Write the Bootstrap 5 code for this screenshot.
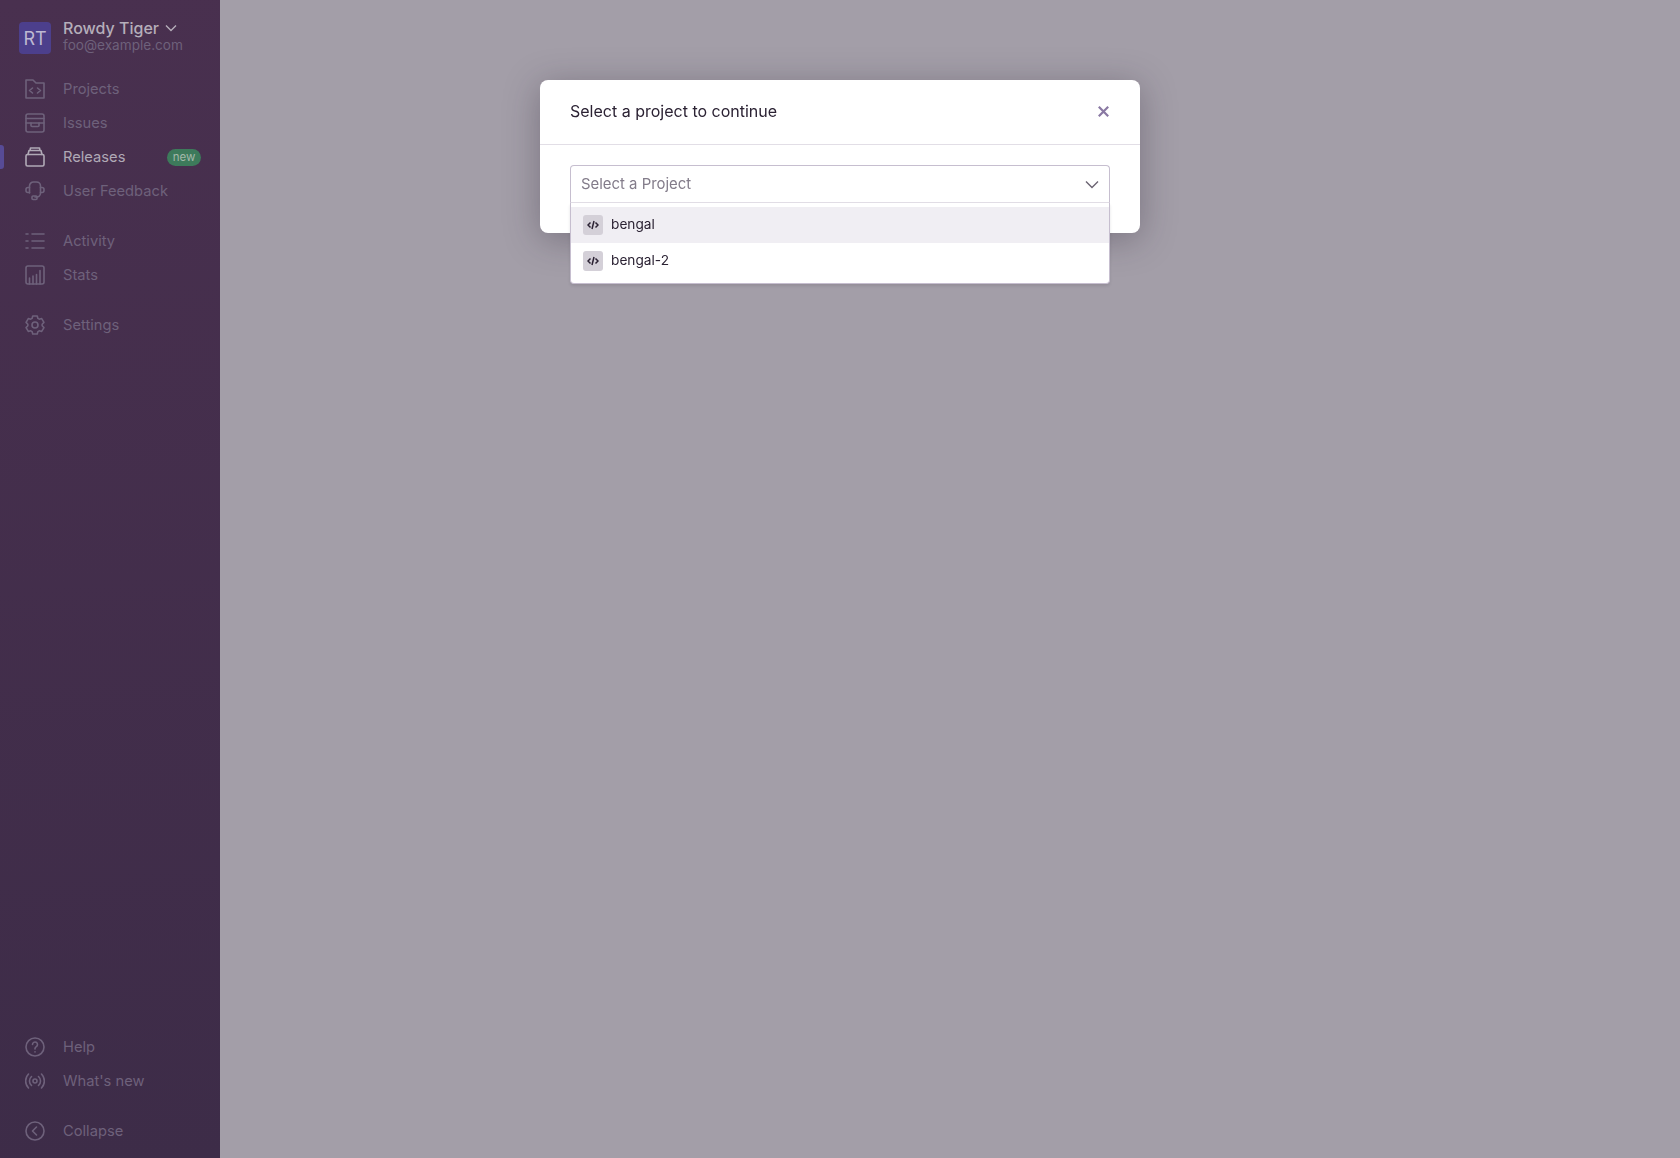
<!DOCTYPE html>
<html lang="en">
<head>
  <meta charset="UTF-8">
  <meta name="viewport" content="width=device-width, initial-scale=1.0">
  <title>Select a project</title>
  <link href="https://cdn.jsdelivr.net/npm/bootstrap@5.3.3/dist/css/bootstrap.min.css" rel="stylesheet">
  <style>
    body {
      background-color: #a39ea8;
      font-family: "Inter", "Liberation Sans", sans-serif;
      font-size: 14.7px;
      height: 1158px;
      overflow: hidden;
    }
    .side-panel {
      width: 220px;
      height: 1158px;
      background: linear-gradient(175deg, #49304f 0%, #3d2c48 100%);
      padding: 22px 0 10px;
    }
    .org-box {
      height: 32px;
      padding: 0 19px;
      margin-bottom: 18px;
      gap: 12px;
    }
    .org-avatar {
      width: 32px;
      height: 32px;
      background-color: #4c3f8c;
      color: #bdb8d2;
      font-size: 18px;
      border-radius: 4px;
    }
    .org-text {
      margin-bottom: 3px;
    }
    .org-name {
      color: #b5aeba;
      font-weight: 500;
      font-size: 16px;
      line-height: 18px;
      margin-top: -1px;
      gap: 6px;
    }
    .org-mail {
      color: #6e617b;
      font-size: 13.6px;
      line-height: 16px;
    }
    .side-link {
      height: 34px;
      padding: 0 19px 0 25px;
      gap: 18px;
      color: #6e617b;
      position: relative;
    }
    .side-link svg {
      width: 20px;
      height: 20px;
      flex: none;
      fill: none;
      stroke: currentColor;
      stroke-width: 1.6;
      stroke-linecap: round;
      stroke-linejoin: round;
    }
    .side-link.current {
      color: #b0a9b6;
    }
    .side-link.current::before {
      content: "";
      position: absolute;
      left: 0;
      top: 5px;
      width: 4px;
      height: 24px;
      background-color: #574b96;
      border-radius: 0 3px 3px 0;
    }
    .new-tag {
      background-color: #3d7a5b;
      color: #a3b8aa;
      font-size: 11.5px;
      line-height: 17px;
      height: 17px;
      padding: 0 5.5px;
      border-radius: 9px;
    }
    .group-gap {
      margin-top: 16px;
    }
    .pick-modal {
      width: 600px;
      margin: 80px auto 0;
      height: 153px;
      border: 0;
      border-radius: 8px;
      box-shadow: 0 6px 35px rgba(43, 34, 51, .35);
    }
    .pick-head {
      height: 65px;
      padding: 0 31px 2px 30px;
      border-bottom: 1px solid #e2dee6;
      color: #2b2233;
      font-size: 16px;
    }
    .close-x {
      width: 11px;
      height: 11px;
      stroke: #8a79a3;
      stroke-width: 2.2;
      fill: none;
    }
    .pick-body {
      padding: 20px 30px 0;
      position: relative;
    }
    .pick-control {
      height: 38px;
      padding: 0 10px;
      border: 1px solid #c6becf;
      border-bottom-color: #e2dee6;
      border-radius: 4px 4px 0 0;
      color: #837c8a;
      font-size: 14.9px;
    }
    .pick-control svg {
      width: 14px;
      height: 9px;
      fill: none;
      stroke: #6b6472;
      stroke-width: 1.4;
    }
    .pick-menu {
      position: absolute;
      left: 30px;
      right: 30px;
      top: 58px;
      padding: 4px 0;
      background-color: #fff;
      border: 1px solid #c6becf;
      border-top: 0;
      border-radius: 0 0 4px 4px;
      box-shadow: 0 2px 3px rgba(43, 34, 51, .12);
      z-index: 2;
    }
    .pick-option {
      height: 36px;
      padding: 0 12px 2px;
      gap: 8px;
      color: #2b2233;
      font-size: 13.7px;
    }
    .pick-option.hovered {
      background-color: #f0eef3;
    }
    .code-badge {
      width: 20px;
      height: 20px;
      margin-top: 2px;
      background-color: #d4d0d8;
      border-radius: 3px;
    }
    .code-badge svg {
      width: 12px;
      height: 12px;
      fill: none;
      stroke: #2b2233;
      stroke-width: 1.5;
    }
  </style>
</head>
<body>

<!-- Sidebar -->
<aside class="side-panel d-flex flex-column">
  <div class="org-box d-flex align-items-center">
    <div class="org-avatar d-flex align-items-center justify-content-center">RT</div>
    <div class="org-text">
      <div class="org-name d-flex align-items-center">Rowdy Tiger
        <svg width="12" height="8" viewBox="0 0 12 8" fill="none" stroke="#b5aeba" stroke-width="1.4"><path d="M1 1.5l5 5 5-5"/></svg>
      </div>
      <div class="org-mail">foo@example.com</div>
    </div>
  </div>

  <nav class="d-flex flex-column">
    <a class="side-link d-flex align-items-center text-decoration-none">
      <svg viewBox="0 0 20 20"><path d="M1 1h7l3 3h8v15H1z"/><path d="M7.500 9l-3 2.500 3 2.500M12.500 9l3 2.500-3 2.500"/></svg>Projects</a>
    <a class="side-link d-flex align-items-center text-decoration-none">
      <svg viewBox="0 0 20 20"><rect x="1" y="1" width="18" height="18" rx="2"/><path d="M1 5.500h18M1 10h18"/><path d="M6 10v2.500a1 1 0 0 0 1 1h6a1 1 0 0 0 1-1V10"/></svg>Issues</a>
    <a class="side-link current d-flex align-items-center text-decoration-none">
      <svg viewBox="0 0 20 20"><rect x="1" y="7.500" width="18" height="11.500" rx="1.500"/><path d="M3 7.500L4 3.500h12l1 4M5 3.500L5.500 1h9l.5 2.500"/></svg>Releases
      <span class="new-tag ms-auto">new</span></a>
    <a class="side-link d-flex align-items-center text-decoration-none">
      <svg viewBox="0 0 20 20"><path d="M4.500 12V5a4 4 0 0 1 4-4h3a4 4 0 0 1 4 4v7a4 4 0 0 1-4 4H10"/><path d="M4.500 6.500H3a2 2 0 0 0-2 2v1a2 2 0 0 0 2 2h1.500M15.500 6.500H17a2 2 0 0 1 2 2v1a2 2 0 0 1-2 2h-1.500"/><rect x="7" y="15" width="5" height="3.500" rx="1"/></svg>User Feedback</a>

    <a class="side-link group-gap d-flex align-items-center text-decoration-none">
      <svg viewBox="0 0 20 20"><path d="M1 3h2M7 3h12M1 10h2M7 10h12M1 17h2M7 17h12"/></svg>Activity</a>
    <a class="side-link d-flex align-items-center text-decoration-none">
      <svg viewBox="0 0 20 20"><rect x="1" y="1" width="18" height="18" rx="2"/><path d="M4.500 19v-6M8 19v-8M11.500 19V9.500M15 19V5.500"/></svg>Stats</a>

    <a class="side-link group-gap d-flex align-items-center text-decoration-none">
      <svg viewBox="0 0 20 20"><path d="M7.070 3.420L7.750.98h4.500l.68 2.440 1.300.76 2.460-.64 2.250 3.890-1.780 1.820v1.500l1.780 1.820-2.250 3.890-2.460-.64-1.300.76-.68 2.440h-4.500l-.68-2.440-1.300-.76-2.460.64-2.250-3.890 1.780-1.820v-1.500L1.060 7.430l2.250-3.890 2.460.64z"/><circle cx="10" cy="10" r="3"/></svg>Settings</a>
  </nav>

  <nav class="d-flex flex-column mt-auto">
    <a class="side-link d-flex align-items-center text-decoration-none">
      <svg viewBox="0 0 20 20"><circle cx="10" cy="10" r="9"/><path d="M7.500 7.500a2.500 2.500 0 1 1 3.800 2.100c-.9.600-1.300 1-1.300 2v.4M10 14.800v.2"/></svg>Help</a>
    <a class="side-link d-flex align-items-center text-decoration-none">
      <svg viewBox="0 0 20 20"><circle cx="10" cy="10" r="2"/><path d="M6.500 5.500a6 6 0 0 0 0 9M13.500 5.500a6 6 0 0 1 0 9M3.500 3a10 10 0 0 0 0 14M16.500 3a10 10 0 0 1 0 14"/></svg>What's new</a>
    <a class="side-link group-gap d-flex align-items-center text-decoration-none">
      <svg viewBox="0 0 20 20"><circle cx="10" cy="10" r="9"/><path d="M11.500 6l-4 4 4 4"/></svg>Collapse</a>
  </nav>
</aside>

<!-- Project picker -->
<div class="modal d-block" tabindex="-1">
  <div class="pick-modal bg-white">
    <div class="pick-head d-flex align-items-center justify-content-between">
      <span>Select a project to continue</span>
      <svg class="close-x" viewBox="0 0 11 11"><path d="M.8.8l9.400 9.400M10.200.8L.8 10.200"/></svg>
    </div>
    <div class="pick-body">
      <div class="pick-control d-flex align-items-center justify-content-between">
        <span>Select a Project</span>
        <svg viewBox="0 0 14 9"><path d="M1 1.500l6 6 6-6"/></svg>
      </div>
      <div class="pick-menu">
        <div class="pick-option hovered d-flex align-items-center">
          <span class="code-badge d-flex align-items-center justify-content-center"><svg viewBox="0 0 12 12"><path d="M3.500 3.500L1 6l2.500 2.500M8.500 3.500L11 6 8.500 8.500M7 2L5 10"/></svg></span>
          bengal
        </div>
        <div class="pick-option d-flex align-items-center">
          <span class="code-badge d-flex align-items-center justify-content-center"><svg viewBox="0 0 12 12"><path d="M3.500 3.500L1 6l2.500 2.500M8.500 3.500L11 6 8.500 8.500M7 2L5 10"/></svg></span>
          bengal-2
        </div>
      </div>
    </div>
  </div>
</div>

<script src="https://cdn.jsdelivr.net/npm/bootstrap@5.3.3/dist/js/bootstrap.bundle.min.js"></script>
</body>
</html>
